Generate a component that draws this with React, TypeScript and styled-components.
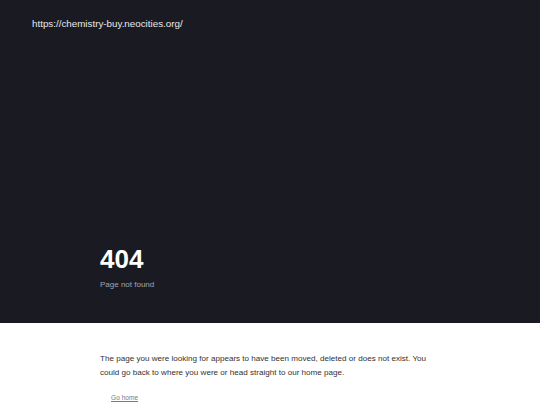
import React from "react";
import styled, { createGlobalStyle } from "styled-components";

const Global = createGlobalStyle`
  html, body { margin: 0; padding: 0; background: #ffffff; }
  body { font-family: "Liberation Sans", Arial, sans-serif; }
  * { box-sizing: border-box; }
`;

const Hero = styled.section`
  height: 323px;
  background: #1a1b22;
  display: flex;
  flex-direction: column;
`;

const TopBar = styled.header`
  padding: 17px 32px 15px;
  font-size: 9.8px;
  line-height: 14px;
  color: #e8e8ec;
`;

const HeroBody = styled.div`
  flex: 1;
  display: flex;
  flex-direction: column;
  justify-content: flex-end;
  padding: 0 100px 32px;
`;

const Code = styled.h1`
  margin: 0;
  font-size: 26px;
  line-height: 30px;
  font-weight: 700;
  color: #ffffff;
`;

const Subtitle = styled.p`
  margin: 5px 0 0;
  font-size: 8px;
  line-height: 12px;
  color: #a3a4ab;
`;

const Content = styled.main`
  padding: 29px 100px 0;
  max-width: 540px;
`;

const Message = styled.p`
  margin: 0;
  max-width: 340px;
  font-size: 8.08px;
  line-height: 14px;
  color: #333333;
`;

const HomeLink = styled.a`
  display: inline-block;
  margin-top: 13px;
  padding-left: 11px;
  font-size: 6.6px;
  line-height: 10px;
  color: #7a7a7a;
  text-decoration: underline;
`;

export default function App() {
  return (
    <>
      <Global />
      <Hero>
        <TopBar>https://chemistry-buy.neocities.org/</TopBar>
        <HeroBody>
          <Code>404</Code>
          <Subtitle>Page not found</Subtitle>
        </HeroBody>
      </Hero>
      <Content>
        <Message>
          The page you were looking for appears to have been moved, deleted or does not exist. You
          could go back to where you were or head straight to our home page.
        </Message>
        <HomeLink href="#">Go home</HomeLink>
      </Content>
    </>
  );
}
